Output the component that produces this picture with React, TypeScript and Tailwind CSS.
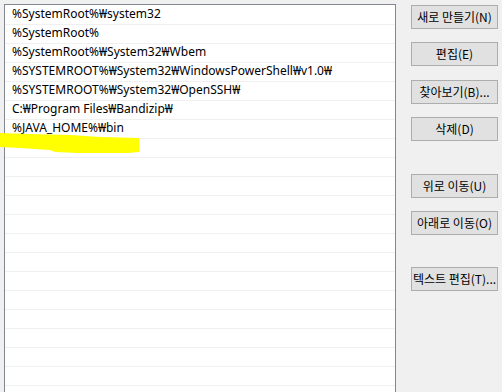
const paths = [
  "%SystemRoot%₩system32",
  "%SystemRoot%",
  "%SystemRoot%₩System32₩Wbem",
  "%SYSTEMROOT%₩System32₩WindowsPowerShell₩v1.0₩",
  "%SYSTEMROOT%₩System32₩OpenSSH₩",
  "C:₩Program Files₩Bandizip₩",
  "%JAVA_HOME%₩bin",
];

const buttons = [
  { label: "새로 만들기(N)", mt: "mt-[5px]" },
  { label: "편집(E)", mt: "mt-[13px]" },
  { label: "찾아보기(B)...", mt: "mt-[14px]" },
  { label: "삭제(D)", mt: "mt-[13px]" },
  { label: "위로 이동(U)", mt: "mt-[33px]" },
  { label: "아래로 이동(O)", mt: "mt-[13px]" },
  { label: "텍스트 편집(T)...", mt: "mt-[32px]" },
];

export default function App() {
  const rows = [...paths, ...Array(16).fill("")];

  return (
    <main
      className="relative w-[502px] h-[392px] overflow-hidden bg-[#f0f0f0] flex text-[12px] text-black"
      style={{ fontFamily: '"Noto Sans", "Noto Sans CJK KR", sans-serif' }}
    >
      {/* path list */}
      <div className="ml-[4px] mt-[4px] w-[392px] h-[400px] shrink-0 border border-[#828790] bg-white pt-[1px] overflow-hidden">
        {rows.map((p, i) => (
          <div
            key={i}
            className="h-[19px] border-b border-[#f0f0f0] pl-[7px] pb-[2px] flex items-center leading-none whitespace-nowrap"
          >
            {p}
          </div>
        ))}
      </div>

      {/* buttons */}
      <div className="ml-[15px] flex flex-col">
        {buttons.map((b) => (
          <button
            key={b.label}
            className={`${b.mt} w-[87px] h-[24px] border border-[#adadad] bg-[#e1e1e1] flex items-center justify-center whitespace-nowrap leading-none text-[12px]`}
            style={{ fontFamily: '"Noto Sans CJK KR", "Noto Sans", sans-serif' }}
          >
            {b.label}
          </button>
        ))}
      </div>

      {/* yellow highlighter mark */}
      <svg className="absolute left-0 top-[130px]" width="142" height="26" viewBox="0 0 142 26">
        <polygon
          points="0,3 30,4 70,5 100,7 139,8 139,22 128,23 78,23 55,22 50,20 20,18 0,17"
          fill="#ffff00"
        />
      </svg>
    </main>
  );
}
